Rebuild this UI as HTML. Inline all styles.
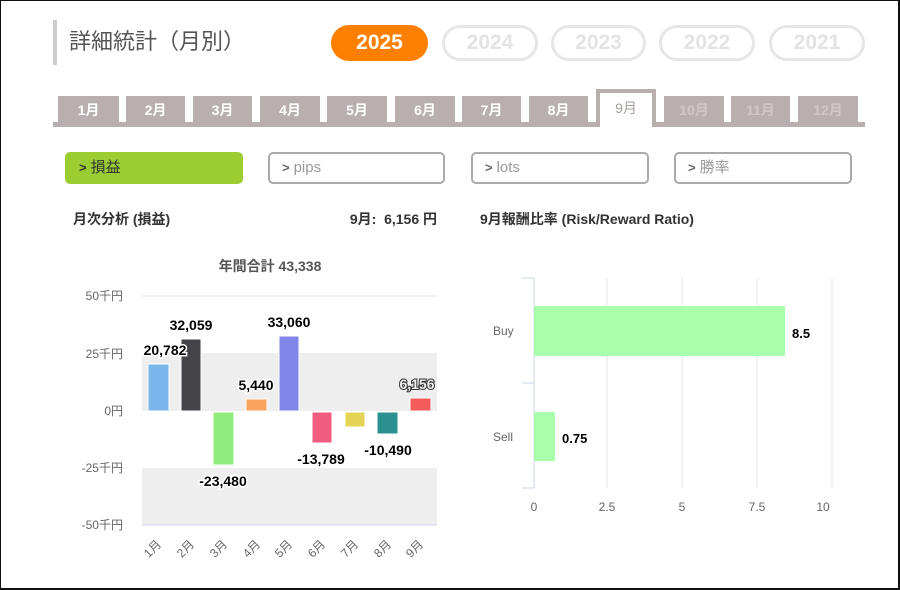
<!DOCTYPE html>
<html><head><meta charset="utf-8"><style>
*{margin:0;padding:0;box-sizing:border-box}
body{width:900px;height:590px;background:#fff;position:relative;overflow:hidden;font-family:"Liberation Sans","Noto Sans CJK JP",sans-serif}
.frame{position:absolute;left:0;top:0;width:900px;height:590px;border:2px solid #111;border-left-width:1px;border-top-width:1px}
.a{position:absolute}
.title{left:53px;top:20px;height:45px;border-left:4px solid #ccc;padding-left:12px;font-size:22px;color:#555;line-height:44px}
.pill{position:absolute;top:25px;height:36px;border-radius:18px;font-weight:bold;font-size:21px;text-align:center;line-height:36px}
.pill.on{background:#ff8000;color:#fff}
.pill.off{border:3px solid #e6e6e6;color:#e3e3e3;line-height:30px}
.tab{position:absolute;top:96px;height:27px;background:#b8afae;color:#fff;font-weight:bold;font-size:14px;text-align:center;line-height:28px}
.tab.dim{color:#d0c8c7}
.tab.act{top:89px;background:#fff;border:4px solid #b8afae;border-bottom:none;color:#a59d9c;height:38px;line-height:30px;font-weight:normal}
.btn{position:absolute;top:152px;height:32px;border:2px solid #aaa;border-radius:5px;font-size:15px;color:#999;line-height:28px;padding-left:12px}
.btn b{font-size:13px;margin-right:4px;color:#666}
.btn.on{background:#9acd32;border-color:#9acd32;color:#333}
.btn.on b{color:#333}
.h{font-size:14px;font-weight:bold;color:#333}
</style></head><body>
<div class="a title">詳細統計（月別）</div>
<div class="pill on" style="left:331px;width:97px">2025</div>
<div class="pill off" style="left:442px;width:96px">2024</div>
<div class="pill off" style="left:551px;width:95px">2023</div>
<div class="pill off" style="left:659px;width:96px">2022</div>
<div class="pill off" style="left:769px;width:96px">2021</div>

<div class="a" style="left:53px;top:122px;width:812px;height:5px;background:#b8afae"></div>
<div class="tab" style="left:58px;width:61px">1月</div>
<div class="tab" style="left:126px;width:59px">2月</div>
<div class="tab" style="left:193px;width:59px">3月</div>
<div class="tab" style="left:260px;width:60px">4月</div>
<div class="tab" style="left:327px;width:60px">5月</div>
<div class="tab" style="left:395px;width:60px">6月</div>
<div class="tab" style="left:462px;width:59px">7月</div>
<div class="tab" style="left:529px;width:59px">8月</div>
<div class="tab act" style="left:596px;width:60px">9月</div>
<div class="tab dim" style="left:664px;width:60px">10月</div>
<div class="tab dim" style="left:731px;width:59px">11月</div>
<div class="tab dim" style="left:798px;width:60px">12月</div>

<div class="btn on" style="left:65px;width:178px"><b>&gt;</b>損益</div>
<div class="btn" style="left:268px;width:177px"><b>&gt;</b>pips</div>
<div class="btn" style="left:471px;width:178px"><b>&gt;</b>lots</div>
<div class="btn" style="left:674px;width:178px"><b>&gt;</b>勝率</div>

<div class="a h" style="left:73px;top:209px">月次分析 (損益)</div>
<div class="a h" style="left:300px;top:209px;width:137px;text-align:right">9月:&nbsp; 6,156 円</div>
<div class="a h" style="left:480px;top:209px">9月報酬比率 (Risk/Reward Ratio)</div>

<svg class="a" style="left:0;top:0" width="900" height="590" font-family="Liberation Sans,Noto Sans CJK JP,sans-serif">
<text x="270" y="271" text-anchor="middle" font-size="14" font-weight="bold" fill="#555">年間合計 43,338</text>
<rect x="142" y="353" width="295" height="58" fill="#eee"/>
<rect x="142" y="468" width="295" height="57" fill="#eee"/>
<line x1="142" y1="296" x2="437" y2="296" stroke="#e6e6e6"/>
<line x1="142" y1="525" x2="437" y2="525" stroke="#ccd6eb"/>
<g font-size="12" fill="#666" text-anchor="end">
<text x="123" y="300">50千円</text><text x="123" y="358">25千円</text><text x="123" y="415">0円</text><text x="123" y="472">-25千円</text><text x="123" y="529">-50千円</text>
</g>
<g stroke="#fff" stroke-width="1">
<rect x="148" y="364" width="21" height="47" fill="#7cb5ec"/>
<rect x="181" y="339" width="20" height="72" fill="#434348"/>
<rect x="213" y="412" width="21" height="53" fill="#90ed7d"/>
<rect x="246" y="399" width="21" height="12" fill="#f7a35c"/>
<rect x="279" y="336" width="20" height="75" fill="#8085e9"/>
<rect x="312" y="412" width="20" height="31" fill="#f15c80"/>
<rect x="345" y="412" width="20" height="15" fill="#e4d354"/>
<rect x="377" y="412" width="21" height="22" fill="#2b908f"/>
<rect x="410" y="398" width="21" height="13" fill="#f45b5b"/>
</g>
<g font-size="14" font-weight="bold" fill="#000" text-anchor="middle" stroke="#fff" stroke-width="3" paint-order="stroke">
<text x="165" y="355">20,782</text><text x="191" y="330">32,059</text><text x="223" y="486">-23,480</text>
<text x="256" y="390">5,440</text><text x="289" y="327">33,060</text><text x="321" y="464">-13,789</text>
<text x="388" y="455">-10,490</text><text x="417" y="389" fill="#eee" stroke="#333" stroke-width="2">6,156</text>
</g>
<g font-size="12" fill="#666" text-anchor="end">
<text transform="translate(162,545) rotate(-45)">1月</text><text transform="translate(195,545) rotate(-45)">2月</text>
<text transform="translate(228,545) rotate(-45)">3月</text><text transform="translate(261,545) rotate(-45)">4月</text>
<text transform="translate(293,545) rotate(-45)">5月</text><text transform="translate(326,545) rotate(-45)">6月</text>
<text transform="translate(359,545) rotate(-45)">7月</text><text transform="translate(392,545) rotate(-45)">8月</text>
<text transform="translate(424,545) rotate(-45)">9月</text>
</g>

<g stroke="#e6e6e6"><line x1="607" y1="278" x2="607" y2="488"/><line x1="682" y1="278" x2="682" y2="488"/><line x1="757" y1="278" x2="757" y2="488"/><line x1="832" y1="278" x2="832" y2="488"/></g>
<g stroke="#ccd6eb" fill="none"><path d="M522 278H534V488H522M522 383H534"/></g>
<rect x="534" y="306" width="251" height="50" fill="#aaffaa"/>
<rect x="534" y="412" width="21" height="49" fill="#aaffaa"/>
<g font-size="12" fill="#666"><text x="493" y="335">Buy</text><text x="493" y="441">Sell</text></g>
<g font-size="13" font-weight="bold" fill="#000"><text x="792" y="338">8.5</text><text x="562" y="443">0.75</text></g>
<g font-size="12" fill="#666" text-anchor="middle"><text x="534" y="511">0</text><text x="607" y="511">2.5</text><text x="682" y="511">5</text><text x="757" y="511">7.5</text><text x="823" y="511">10</text></g>
</svg>
<div class="frame"></div>
</body></html>
